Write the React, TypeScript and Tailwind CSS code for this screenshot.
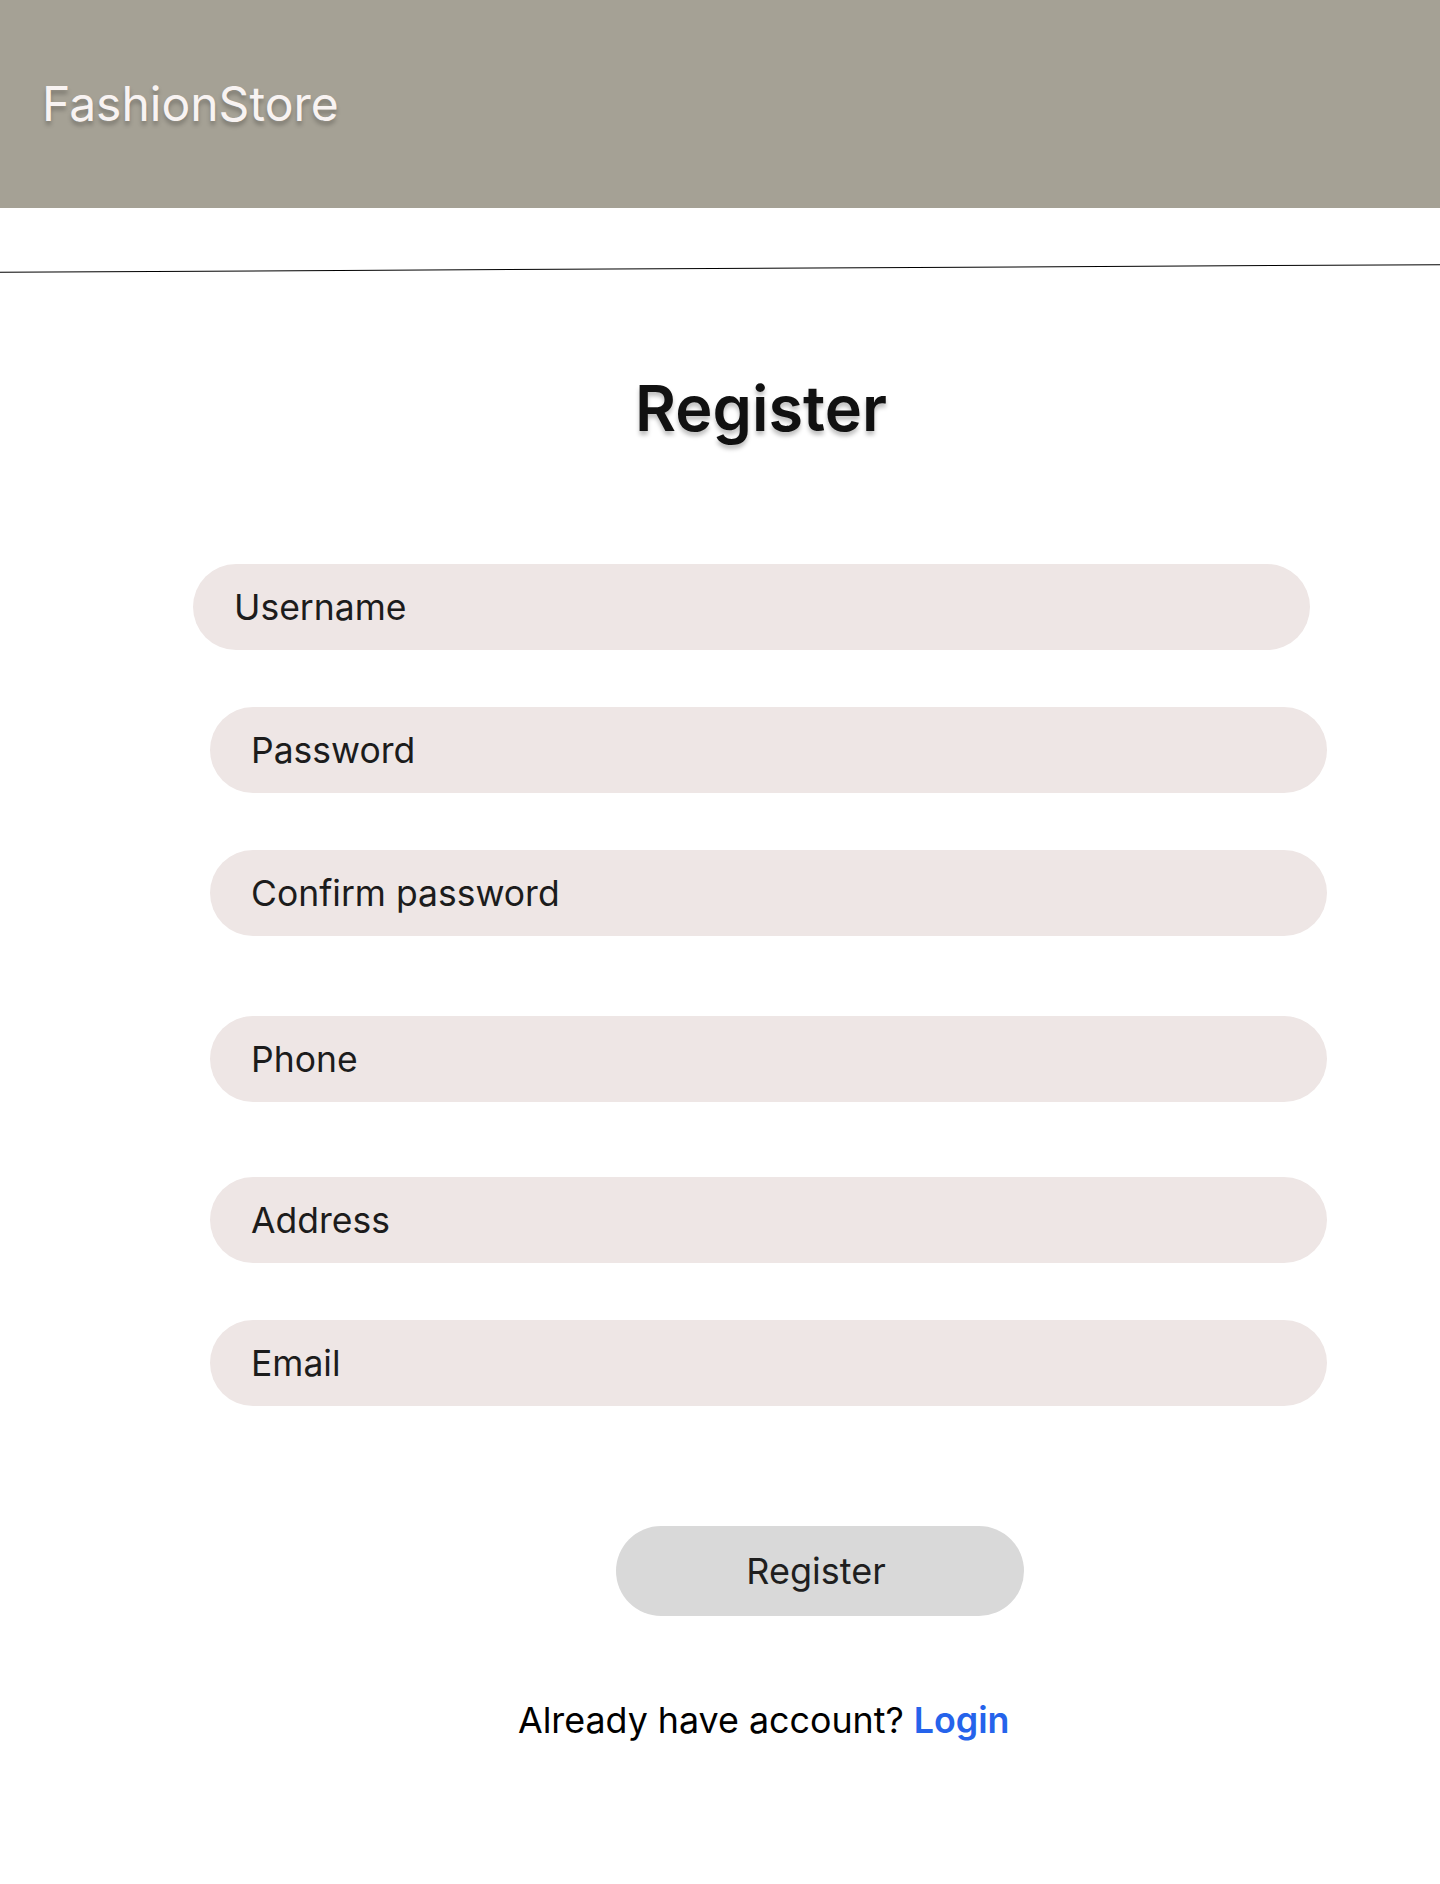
import React from "react";

const fields = [
  { label: "Username", cls: "mt-[124px] ml-[193px]", type: "text" },
  { label: "Password", cls: "mt-[57px] ml-[210px]", type: "password" },
  { label: "Confirm password", cls: "mt-[57px] ml-[210px]", type: "password" },
  { label: "Phone", cls: "mt-[80px] ml-[210px]", type: "tel" },
  { label: "Address", cls: "mt-[75px] ml-[210px]", type: "text" },
  { label: "Email", cls: "mt-[57px] ml-[210px]", type: "email" },
];

const App: React.FC = () => {
  return (
    <div className="min-h-[1884px] bg-white font-['Inter','Liberation_Sans',sans-serif] text-[#1c1c1c]">
      {/* top bar */}
      <header className="h-[208px] bg-[#a5a195] flex items-center pl-[42px]">
        <span className="text-[48px] leading-none text-[#f8f3f2] [text-shadow:0_4px_4px_rgba(0,0,0,0.25)]">
          FashionStore
        </span>
      </header>

      <hr className="mt-[60px] border-0 border-t border-black -rotate-[0.3deg]" />

      <form className="flex flex-col" onSubmit={(e) => e.preventDefault()}>
        <h1 className="mt-[108px] text-center pl-[82px] text-[63px] leading-none font-semibold text-[#111] [text-shadow:0_4px_4px_rgba(0,0,0,0.25)]">
          Register
        </h1>

        {fields.map((f) => (
          <input
            key={f.label}
            type={f.type}
            placeholder={f.label}
            className={`${f.cls} w-[1117px] h-[86px] rounded-full bg-[#eee6e5] pl-[41px] text-[35.5px] text-[#1c1c1c] placeholder:text-[#1c1c1c] outline-none`}
          />
        ))}

        <button
          type="submit"
          className="mt-[120px] ml-[616px] w-[408px] h-[90px] rounded-full bg-[#d9d9d9] pr-[8px] text-[36px] text-[#1f1f1f]"
        >
          Register
        </button>

        <p className="mt-[87px] ml-[518px] text-[35.8px] leading-none text-black">
          Already have account?{" "}
          <a href="#" className="font-semibold text-[#2563eb]">
            Login
          </a>
        </p>
      </form>
    </div>
  );
};

export default App;
